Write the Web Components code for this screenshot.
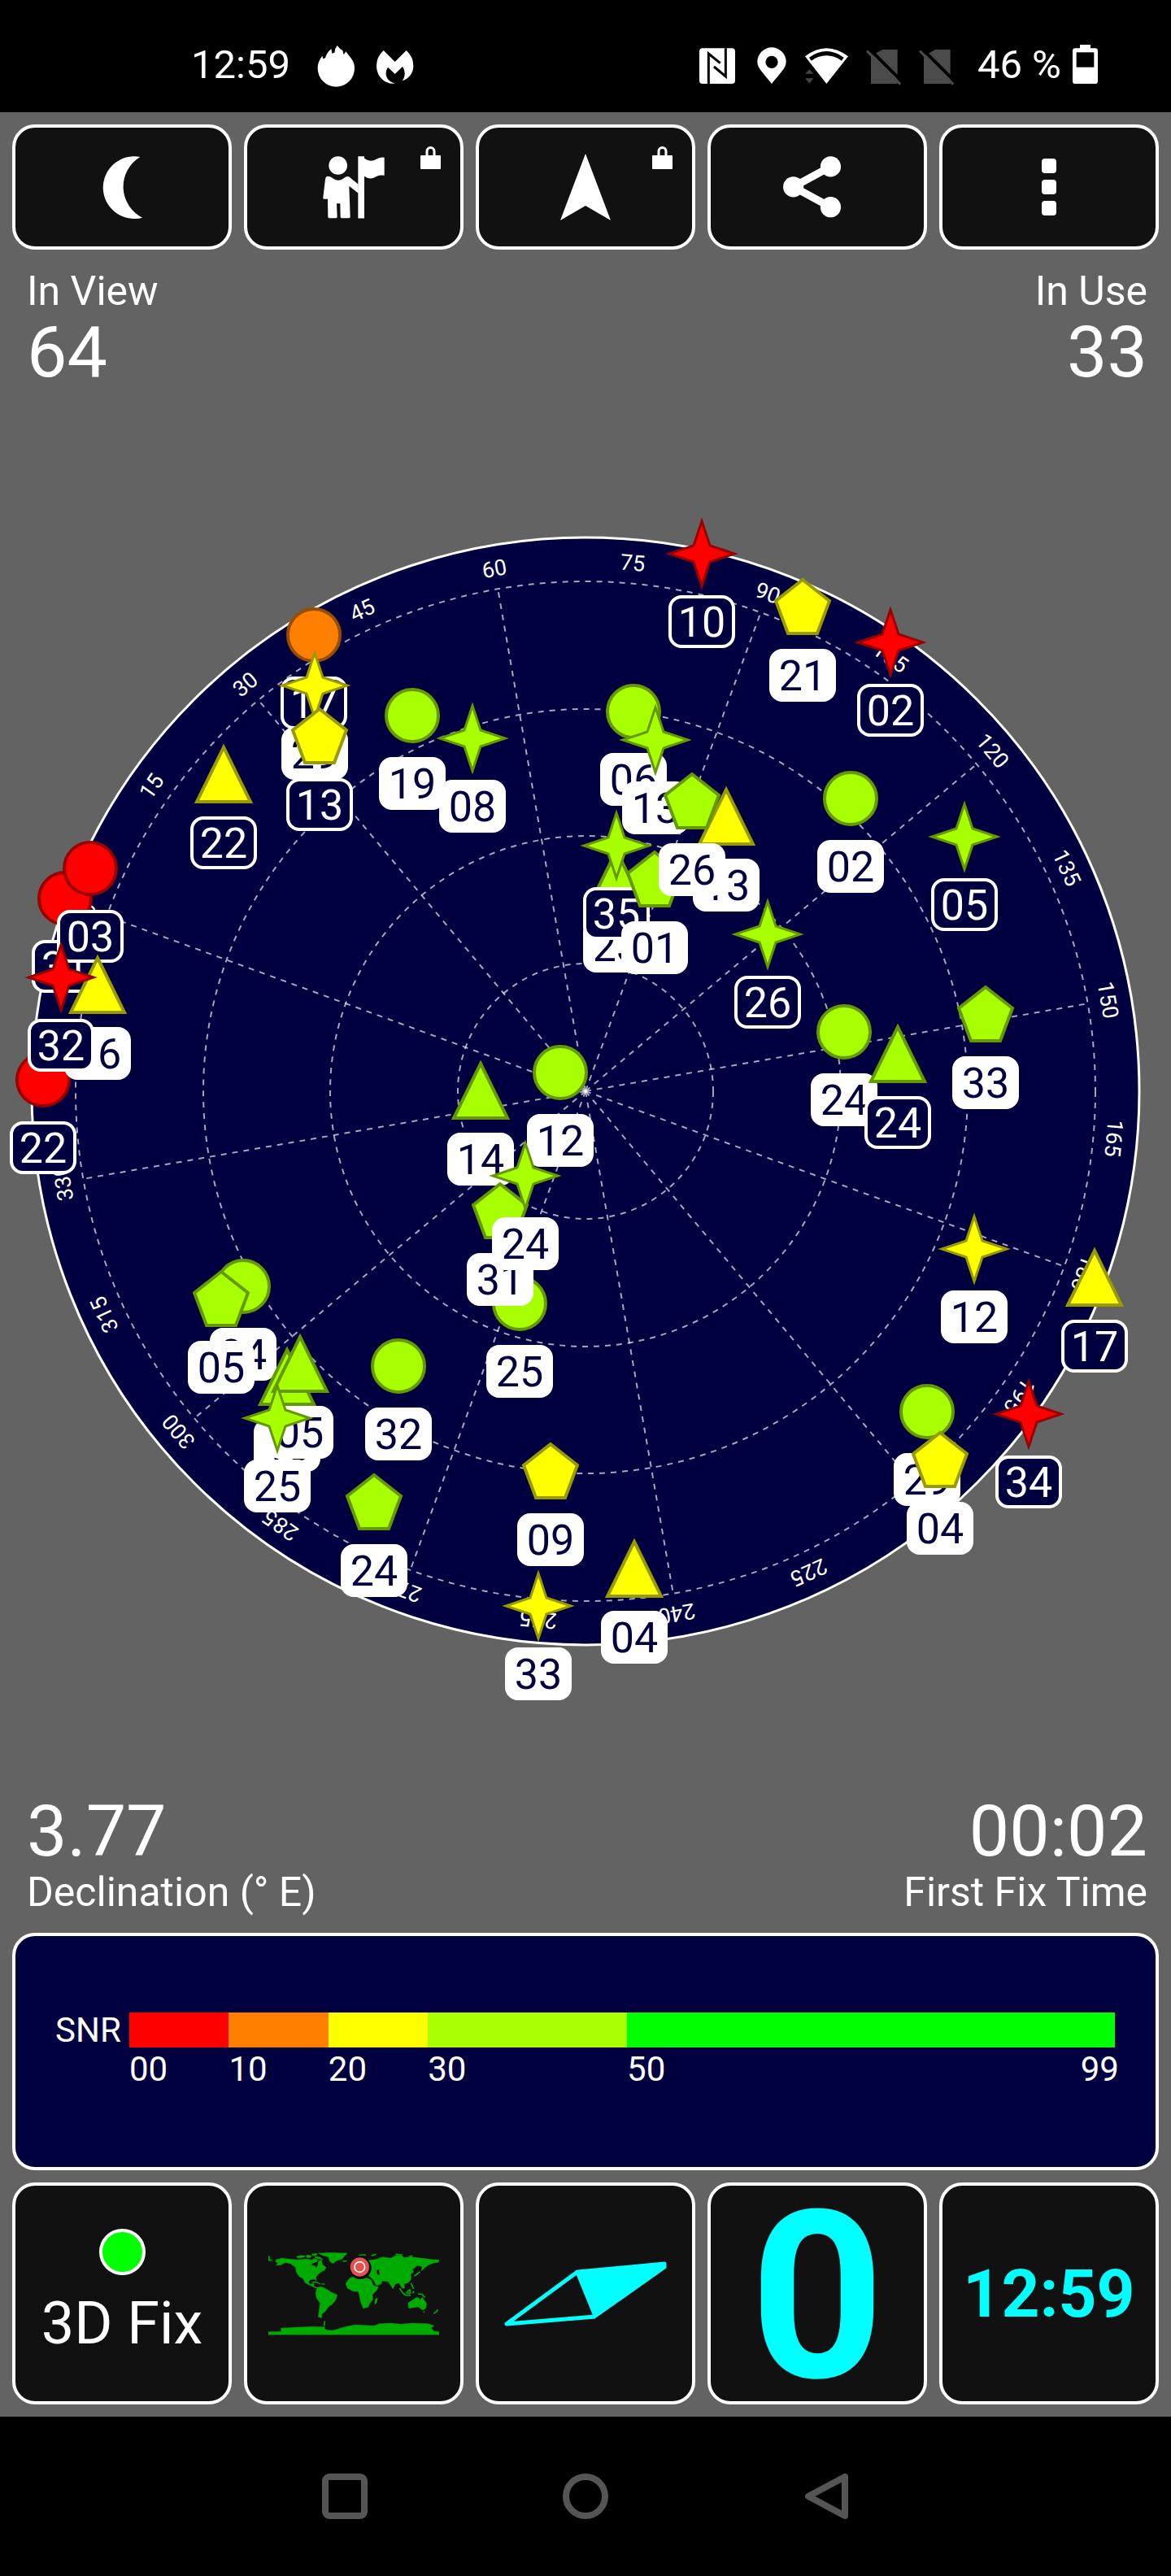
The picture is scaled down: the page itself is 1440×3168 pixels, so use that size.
<!DOCTYPE html>
<html lang="en">
<head>
<meta charset="utf-8">
<meta name="viewport" content="width=device-width, initial-scale=1">
<title>GPS status</title>
<style>
  body { margin: 0; background: #000; font-family: Roboto, "Liberation Sans", sans-serif; color: #fff; }
</style>
</head>
<body>
<gps-app></gps-app>

<script>
const define = (name, html, setup) => {
  const template = document.createElement('template');
  template.innerHTML = html;
  customElements.define(name, class extends HTMLElement {
    connectedCallback() {
      if (this.shadowRoot) return;
      this.attachShadow({ mode: 'open' }).append(template.content.cloneNode(true));
      if (setup) setup(this, this.shadowRoot);
    }
  });
};

/* Phone status bar */
define('status-bar', `
<style>
  :host { display: flex; justify-content: space-between; box-sizing: border-box; height: 138px; padding: 52px 90px 0 235px; background: #000; font-size: 49px; line-height: 56px; }
  div { display: flex; }
  .left { gap: 27px; }
  .right { gap: 22px; }
  .power { gap: 14px; }
  svg { display: block; height: 56px; }
</style>
<div class="left">
  <span>12:59</span>
  <svg width="52" viewBox="756 36 156 168" fill="#fff"><path d="M776 132C776 112 784 98 793 86L796 97L804 94Q808 76 826 60L829 77L838 74Q838 60 848 48Q858 62 868 66L872 82L880 70Q890 84 900 96Q912 112 912 132A68 68 0 0 1 776 132Z"/></svg>
  <svg width="46" viewBox="996 36 138 168" fill="#fff"><path d="M996 122Q996 90 1022 66L1064 108L1106 66Q1132 90 1132 122C1132 150 1116 170 1091 178C1104 162 1102 140 1092 126L1064 153L1038 128C1024 150 1030 178 1065 188C1025 192 996 160 996 122Z"/></svg>
</div>
<div class="right">
  <svg width="49" viewBox="27 36 147 168"><rect x="27" y="58" width="132" height="131" rx="12" fill="#fff"/><path d="M61 189V78L104 113M124 58V162L81 126" fill="none" stroke="#000" stroke-width="9"/></svg>
  <svg width="37" viewBox="240 36 111 168"><path fill="#fff" fill-rule="evenodd" d="M294 189C262 148 241 132 241 108A53 53 0 0 1 347 108C347 132 326 148 294 189ZM294 86A23 23 0 1 0 294 132A23 23 0 1 0 294 86Z"/></svg>
  <svg width="53" viewBox="417 36 159 168"><path fill="#fff" d="M417 88Q496 28 576 88L496 189Z"/><path d="M432 92Q496 46 560 92L552 104Q496 66 440 104Z"/><path fill="#444" stroke="#000" stroke-width="3" d="M415 154L433 134L451 154ZM415 167H451L433 190Z"/></svg>
  <svg width="43" viewBox="642 36 129 168"><path fill="#4b4b4b" d="M703 63H758V189H660V86Z"/><path stroke="#000" stroke-width="12" d="M652 58L776 182"/><path stroke="#4b4b4b" stroke-width="9" d="M645 68L769 191"/></svg>
  <svg width="50" viewBox="642 36 150 168"><path fill="#4b4b4b" d="M703 63H758V189H660V86Z"/><path stroke="#000" stroke-width="12" d="M652 58L776 182"/><path stroke="#4b4b4b" stroke-width="9" d="M645 68L769 191"/></svg>
  <div class="power">
    <span>46 %</span>
    <svg width="31" viewBox="1407 36 93 168"><path fill="#fff" d="M1434 45H1473V58H1490Q1500 58 1500 68V179Q1500 189 1490 189H1417Q1407 189 1407 179V68Q1407 58 1417 58H1434Z"/><path d="M1421 73H1486V128H1421Z"/></svg>
  </div>
</div>`);

/* Framed button, optionally with a padlock in its corner */
define('tile-button', `
<style>
  :host { display: block; flex: 1 1 0; min-width: 0; }
  button { position: relative; display: flex; flex-direction: column; align-items: center; justify-content: center; gap: 18px; box-sizing: border-box; width: 100%; height: var(--tile-height, 154px); margin: 0; padding: 0; border: 4px solid #fff; border-radius: 28px; background: #111; color: #fff; font: inherit; }
  .lock { display: none; position: absolute; top: 23px; right: 24px; }
  :host([locked]) .lock { display: block; }
</style>
<button type="button"><slot></slot>
  <svg class="lock" width="25" height="28" viewBox="0 0 25 28"><rect y="11" width="25" height="17" rx="1" fill="#fff"/><path d="M8 12V6A4.500 4.500 0 0 1 17 6V12" fill="none" stroke="#fff" stroke-width="3"/></svg>
</button>`, (host, root) => {
  root.querySelector('button').setAttribute('aria-label', host.getAttribute('label'));
});

/* Caption with a large value */
define('gps-reading', `
<style>
  :host { display: flex; flex-direction: column; gap: 3px; font-size: 50px; line-height: 56px; }
  :host([below]) { flex-direction: column-reverse; }
  :host([end]) { text-align: right; }
  .value { font-size: 88px; line-height: 88px; }
</style>
<span><slot name="caption"></slot></span>
<span class="value"><slot></slot></span>`);

/* Polar sky view */
define('sky-plot', `
<style>
  :host { display: block; }
  svg { display: block; width: 100%; height: auto; }
  .disc { fill: #000040; stroke: #fff; stroke-width: 3; }
  .grid { fill: none; stroke: #fff; stroke-opacity: .65; stroke-width: 2; stroke-dasharray: 7 7; }
  .azimuth { font-size: 27px; fill: #fff; text-anchor: middle; }
  .shape { stroke-width: 4; }
  .star { stroke-width: 3; }
  .tag { font-size: 52px; text-anchor: middle; }
  .green { fill: #a8ff00; stroke: #659900; }
  .yellow { fill: #ff0; stroke: #990; }
  .orange { fill: #ff8000; stroke: #994d00; }
  .red { fill: #f00; stroke: #900; }
</style>
<svg viewBox="0 477 1440 1731" role="img" aria-label="Sky view"></svg>`, (host, root) => {
  const cx = 720, cy = 1342, heading = 69.9;
  let out = `<circle class="disc" cx="${cx}" cy="${cy}" r="681"/>`;
  for (const r of [157, 314, 470, 627]) out += `<circle class="grid" cx="${cx}" cy="${cy}" r="${r}"/>`;
  for (let az = 0; az < 360; az += 15) {
    if (az % 30 === 0) out += `<path class="grid" d="M${cx} ${cy}v-627" transform="rotate(${az - heading} ${cx} ${cy})"/>`;
    out += `<text class="azimuth" x="${cx}" y="${cy - 643}" transform="rotate(${az - heading} ${cx} ${cy})">${az}</text>`;
  }
  const shapes = {
    circle: '<circle r="32"',
    star: '<polygon points="0,-40 10,-10 40,0 10,10 0,40 -10,10 -40,0 -10,-10"',
    triangle: '<polygon points="0,-34 33,33 -33,33"',
    pentagon: '<polygon points="0,-34 33,-8 18,32 -18,32 -33,-8"'
  };
  /* shape, signal colour, x, y, number, used in the fix; later ones lie on top */
  const satellites = [
    ['circle', 'orange', 386, 781, '17', 0], ['star', 'yellow', 387, 843, '29', 1], ['pentagon', 'yellow', 393, 906, '13', 0],
    ['triangle', 'yellow', 275, 953, '22', 0], ['circle', 'green', 507, 880, '19', 1], ['star', 'green', 581, 908, '08', 1],
    ['circle', 'red', 80, 1105, '31', 0], ['circle', 'red', 111, 1068, '03', 0], ['circle', 'red', 53, 1328, '22', 0],
    ['triangle', 'yellow', 120, 1212, '16', 1], ['star', 'red', 75, 1202, '32', 0],
    ['star', 'red', 863, 681, '10', 0], ['pentagon', 'yellow', 987, 747, '21', 1], ['star', 'red', 1095, 790, '02', 0],
    ['circle', 'green', 779, 875, '06', 1], ['star', 'green', 806, 910, '13', 1], ['triangle', 'yellow', 893, 1005, '13', 1],
    ['triangle', 'green', 758, 1080, '23', 1], ['star', 'green', 758, 1040, '35', 0], ['pentagon', 'green', 805, 1082, '01', 1],
    ['pentagon', 'green', 851, 986, '26', 1], ['circle', 'green', 1046, 982, '02', 1], ['star', 'green', 1186, 1029, '05', 0],
    ['star', 'green', 944, 1149, '26', 0], ['pentagon', 'green', 1212, 1248, '33', 1], ['circle', 'green', 1038, 1269, '24', 1],
    ['triangle', 'green', 1104, 1297, '24', 0], ['triangle', 'green', 591, 1342, '14', 1], ['circle', 'green', 689, 1319, '12', 1],
    ['circle', 'green', 639, 1603, '25', 1], ['pentagon', 'green', 615, 1490, '31', 1], ['star', 'green', 646, 1446, '24', 1],
    ['circle', 'green', 299, 1582, '04', 1], ['pentagon', 'green', 272, 1598, '05', 1], ['triangle', 'green', 353, 1694, '13', 1],
    ['triangle', 'green', 369, 1678, '05', 1], ['star', 'green', 341, 1744, '25', 1], ['circle', 'green', 490, 1680, '32', 1],
    ['pentagon', 'green', 460, 1848, '24', 1], ['pentagon', 'yellow', 677, 1810, '09', 1], ['star', 'yellow', 662, 1975, '33', 1],
    ['triangle', 'yellow', 780, 1930, '04', 1], ['circle', 'green', 1140, 1736, '29', 1], ['pentagon', 'yellow', 1156, 1796, '04', 1],
    ['star', 'red', 1265, 1739, '34', 0], ['triangle', 'yellow', 1346, 1572, '17', 0], ['star', 'yellow', 1198, 1536, '12', 1]
  ];
  for (const [shape, colour, x, y, id, used] of satellites) {
    out += `<g transform="translate(${x} ${y})">${shapes[shape]} class="shape ${shape} ${colour}"/>
      <rect x="-39" y="53" width="78" height="61" rx="14" stroke="#fff" stroke-width="4" fill="${used ? '#fff' : '#000040'}"/>
      <text class="tag" y="102" fill="${used ? '#000040' : '#fff'}">${id}</text></g>`;
  }
  root.querySelector('svg').innerHTML = out;
});

/* Signal strength legend */
define('snr-legend', `
<style>
  :host { display: flex; gap: 10px; box-sizing: border-box; height: 292px; padding: 94px 50px 0 49px; border: 4px solid #fff; border-radius: 28px; background: #000040; font-size: 42px; }
  .name { line-height: 44px; width: 81px; }
  .scale { flex: 1; display: flex; flex-direction: column; gap: 2px; }
  .bar, .ticks { display: flex; }
  .bar { height: 43px; }
  .ticks { line-height: 50px; }
  .bar i, .ticks span { flex: 10 1 0; min-width: 0; }
  .bar i:nth-child(4), .ticks span:nth-child(4) { flex-grow: 20; }
  .bar i:nth-child(5), .ticks span:nth-child(5) { flex-grow: 49; }
  .ticks .last { display: flex; justify-content: space-between; }
  b { font-weight: 400; }
  .last b:last-child { margin-right: -5px; }
</style>
<span class="name">SNR</span>
<div class="scale">
  <div class="bar"><i style="background:#f00"></i><i style="background:#ff8000"></i><i style="background:#ff0"></i><i style="background:#a8ff00"></i><i style="background:#0f0"></i></div>
  <div class="ticks"><span>00</span><span>10</span><span>20</span><span>30</span><span class="last"><b>50</b><b>99</b></span></div>
</div>`);

/* System navigation */
define('nav-bar', `
<style>
  :host { display: flex; justify-content: center; align-items: center; gap: 240px; height: 196px; background: #000; }
  button { display: block; padding: 0; border: 0; background: none; }
  svg { display: block; fill: none; stroke: #555; stroke-width: 8; stroke-linejoin: round; }
</style>
<button type="button" aria-label="Recent apps"><svg width="56" height="56" viewBox="0 0 56 56"><rect x="4" y="4" width="48" height="48" rx="5"/></svg></button>
<button type="button" aria-label="Home"><svg width="56" height="56" viewBox="0 0 56 56"><circle cx="28" cy="28" r="24"/></svg></button>
<button type="button" aria-label="Back"><svg width="56" height="56" viewBox="0 0 56 56"><path d="M6 28L51 4V52Z"/></svg></button>`);

define('gps-app', `
<style>
  :host { display: block; background: #636363; }
  svg { display: block; }
  .row { display: flex; gap: 15px; padding: 15px; }
  .top { padding-bottom: 0; }
  .bottom { --tile-height: 273px; }
  .readings { display: flex; justify-content: space-between; padding: 0 29px 0 33px; }
  .readings.head { padding-top: 23px; }
  snr-legend { margin: 22px 15px 0; }
  .dot { box-sizing: border-box; width: 57px; height: 57px; border: 4px solid #fff; border-radius: 50%; background: #0f0; }
  .fix { font-size: 72px; line-height: 84px; }
  .big, .clock { color: #0ff; font-weight: 700; }
  .big { padding-top: 8px; font-size: 288px; line-height: 256px; }
  .clock { font-size: 82px; line-height: 96px; }
</style>
<status-bar></status-bar>
<div class="row top">
  <tile-button label="Night mode"><svg width="50" height="77" viewBox="-20 455 150 231"><path fill="#fff" d="M122 458A115 115 0 1 0 130 682A128 128 0 0 1 122 458Z"/></svg></tile-button>
  <tile-button label="Waypoint" locked><svg width="76" height="77" viewBox="801 456 228 230" fill="#fff"><circle cx="857" cy="490" r="34"/><path d="M818 530Q828 530 838 537Q858 552 878 537Q890 528 898 532L932 560V593L898 566L902 680Q902 684 898 684H870Q866 684 866 680L865 630H852L854 680Q854 684 850 684H824Q820 684 820 680L819 614H806Q801 614 802 608L810 540Q811 531 818 530Z"/><path d="M931 456H954V464Q976 480 1000 466Q1015 458 1028 461V527Q1012 524 1000 530Q976 546 954 530V685H931Z"/></svg></tile-button>
  <tile-button label="Navigate" locked><svg width="62" height="82" viewBox="0 0 62 82"><path fill="#fff" d="M31 0L62 82L31 64L0 82Z"/></svg></tile-button>
  <tile-button label="Share"><svg width="85" height="76" viewBox="338 459 256 227"><path d="M514 497L376 572L514 647" fill="none" stroke="#fff" stroke-width="28"/><g fill="#fff"><circle cx="514" cy="497" r="38"/><circle cx="376" cy="572" r="38"/><circle cx="514" cy="647" r="38"/></g></svg></tile-button>
  <tile-button label="Menu"><svg width="18" height="70" viewBox="0 0 18 70" fill="#fff"><rect width="18" height="18" rx="4"/><rect y="26" width="18" height="18" rx="4"/><rect y="52" width="18" height="18" rx="4"/></svg></tile-button>
</div>
<div class="readings head">
  <gps-reading><span slot="caption">In View</span>64</gps-reading>
  <gps-reading end><span slot="caption">In Use</span>33</gps-reading>
</div>
<sky-plot></sky-plot>
<div class="readings">
  <gps-reading below><span slot="caption">Declination (° E)</span>3.77</gps-reading>
  <gps-reading below end><span slot="caption">First Fix Time</span>00:02</gps-reading>
</div>
<snr-legend></snr-legend>
<div class="row bottom">
  <tile-button label="3D Fix"><span class="dot"></span><span class="fix">3D Fix</span></tile-button>
  <tile-button label="Map"><svg width="210" height="102" viewBox="30 95 630 306"><g fill="#00ab00" stroke="#00ab00" stroke-linejoin="round">
    <path d="M30 108L36 112L34 120L47 126L30 126ZM58 122L80 116L110 120L140 123L165 119L190 123L200 117L214 123L208 130L190 136L188 142L203 145L206 152L212 144L216 126L226 123L230 140L243 150L238 160L226 166L216 174L206 186L207 199L200 194L184 197L178 203L184 213L196 208L199 221L212 225L204 227L184 216L166 208L158 192L144 184L133 168L130 150L112 137L92 133L74 142L58 142L66 134L56 130Z"/>
    <path d="M134 110L150 106L168 108L160 114L138 116ZM172 104L190 107L184 115L170 114ZM190 100L212 99L206 107L192 106ZM200 110L220 112L233 122L222 120L204 116Z"/>
    <path d="M214 99L250 96L322 98L312 108L302 120L282 126L268 136L256 128L252 112L230 106Z"/>
    <path d="M190 205L206 204L222 212M226 211L238 213M364 105L390 104M304 128L320 127" fill="none" stroke-width="4"/>
    <path d="M210 224L226 222L244 230L262 242L284 252L280 268L266 286L250 298L240 313L228 322L226 337L214 333L218 302L221 282L207 262L205 244Z"/>
    <path d="M330 190L350 183L372 184L400 192L410 198L418 217L436 222L432 232L414 252L416 268L404 284L398 297L380 302L370 276L366 256L362 240L342 238L322 228L315 210ZM424 268L433 263L430 280L422 287Z"/>
    <path d="M404 124L430 120L450 112L480 116L500 107L522 106L530 114L560 112L600 117L640 122L660 122L658 132L640 134L620 142L604 154L594 164L598 147L580 144L562 158L566 168L556 174L556 196L544 208L530 211L534 226L524 228L512 208L498 212L490 230L478 212L472 203L450 200L446 212L430 218L418 204L410 190L402 182L376 184L350 182L340 176L345 160L370 140L390 130Z"/>
    <path d="M410 108L428 102M500 102L524 104M548 110L562 108M568 182L578 176L590 166M514 228L526 244L534 252L556 254M540 244L552 232L554 246ZM556 208L566 230M562 246L568 238M582 248L598 250L608 262M655 305L652 312L640 321M238 348L236 366M602 314L606 316" fill="none" stroke-width="5"/>
    <path d="M545 282L566 268L574 262L584 262L590 270L598 260L614 284L610 302L600 308L582 296L560 300L548 301Z"/>
    <path d="M30 388L78 387L76 375L122 372L190 369L240 370L236 376L250 382L272 382L310 370L350 362L420 366L440 358L480 356L520 360L560 356L620 358L642 366L630 374L642 386L660 388V399H30Z"/></g>
    <g fill="#111"><path d="M428 162L438 158L440 178L432 176ZM408 186L424 208L418 206Z"/></g>
    <circle cx="369" cy="153" r="41" fill="#080808"/><circle cx="367" cy="149" r="35" fill="#e55050"/><circle cx="367" cy="149" r="19" fill="none" stroke="#fff" stroke-width="5"/></svg></tile-button>
  <tile-button label="Compass"><svg width="202" height="82" viewBox="0 0 202 82" stroke="#0ff" stroke-width="5" stroke-linejoin="round"><path fill="none" d="M91 14L4 78L113 69"/><path fill="#0ff" d="M91 14L198 4V8L113 68Z"/></svg></tile-button>
  <tile-button label="Speed 0"><span class="big">0</span></tile-button>
  <tile-button label="Clock"><span class="clock">12:59</span></tile-button>
</div>
<nav-bar></nav-bar>`);
</script>
</body>
</html>
